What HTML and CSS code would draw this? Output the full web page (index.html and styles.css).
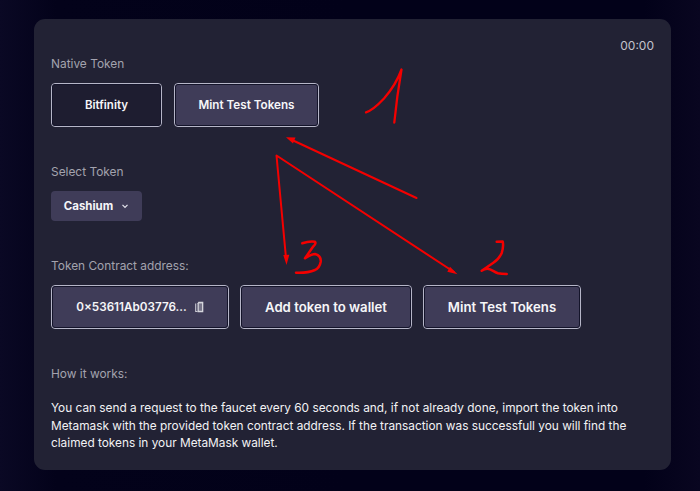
FILE: index.html
```html
<!DOCTYPE html>
<html lang="en">
<head>
<meta charset="utf-8">
<title>Faucet</title>
<link rel="stylesheet" href="styles.css">
</head>
<body>
<main class="card">
  <div class="timer">00:00</div>
  <section class="group group-native">
    <h2 class="label">Native Token</h2>
    <div class="row row-small">
      <button class="btn btn-dark btn-bitfinity">Bitfinity</button>
      <button class="btn btn-mint-small">Mint Test Tokens</button>
    </div>
  </section>
  <section class="group group-select">
    <h2 class="label">Select Token</h2>
    <button class="select">Cashium
      <svg class="chev" width="8" height="6" viewBox="0 0 8 6"><path d="M1.500 1.800 4 4.300 6.500 1.800" fill="none" stroke="#e6e6ee" stroke-width="1.200"/></svg>
    </button>
  </section>
  <section class="group group-contract">
    <h2 class="label">Token Contract address:</h2>
    <div class="row row-large">
      <button class="btn btn-address">0×53611Ab03776...
        <svg class="copy" width="9" height="12" viewBox="0 0 9 12"><path d="M.7 2.500V10.500H2.500" fill="none" stroke="#c9c9d2" stroke-width="1.100"/><path d="M2.500 2.200 3.500.8H8.300V11.200H2.500Z" fill="#d5d5dc"/><rect x="3.800" y="2.400" width="3.200" height="7.400" fill="#767488"/></svg>
      </button>
      <button class="btn btn-add">Add token to wallet</button>
      <button class="btn btn-mint">Mint Test Tokens</button>
    </div>
  </section>
  <section class="group group-how">
    <h2 class="label">How it works:</h2>
    <p class="desc">You can send a request to the faucet every 60 seconds and, if not already done, import the token into Metamask with the provided token contract address. If the transaction was successfull you will find the claimed tokens in your MetaMask wallet.</p>
  </section>
</main>
<svg class="marks" width="700" height="491" viewBox="0 0 700 491" aria-hidden="true">
  <g fill="none" stroke="#f40000" stroke-linecap="round" stroke-linejoin="round">
    <path stroke-width="2" d="M416.500 198 291 139.500"/>
    <path stroke-width="2" d="M454 272 276.500 155.500 286 258"/>
    <path stroke-width="2.300" d="M366 112.300C372 110.500 377 106 384 98.500 391 90.500 397 82 401.500 69.500 399 84 396.500 100 394.300 122.500"/>
    <path stroke-width="2.500" d="M302.300 243.300C306 242 311 241 315 241.700 316 243 315 245 313 246.700L305 258.300C309 256 312 254 315 254 319 255 321 258 320.700 261.700 320 266 318 268.500 315 270 309 272.500 302 273 296 272.700"/>
    <path stroke-width="2.500" d="M496.700 241.700 502.700 241.500C503.500 245 503 249 501.700 253 499.500 258 497 260.500 493 263L481.700 270.700C485 268.500 488 268.500 490 269.300 493 270.500 495 272.500 498 273.300 501 274 504 274 506.700 274"/>
  </g>
  <path fill="#f40000" d="M286 137.300 295.500 137.500 293 143.500Z"/>
  <path fill="#f40000" d="M457.500 274.300 447.300 271.700 450 266.700Z"/>
  <path fill="#f40000" d="M286.500 265 283.300 255 289.300 254.800Z"/>
</svg>
</body>
</html>
```
FILE: styles.css
```css
* { box-sizing: border-box; }
html, body { height: 100%; }
body {
  margin: 0;
  width: 700px;
  height: 491px;
  overflow: hidden;
  padding: 19px 29px 21px 34px;
  background: linear-gradient(90deg, #0a0824 0%, #03021a 8%, #020119 50%, #020119 92%, #090620 100%);
  font-family: Inter, "Liberation Sans", sans-serif;
  color: #fff;
}
.card {
  width: 637px;
  height: 451px;
  padding: 0 17px;
  border-radius: 11px;
  background: #222234;
  display: flex;
  flex-direction: column;
}
.timer {
  align-self: flex-end;
  margin-top: 19px;
  height: 16px;
  line-height: 16px;
  font-size: 12px;
  color: #c4c3cc;
}
.group { display: flex; flex-direction: column; align-items: flex-start; }
.group-native { margin-top: 2px; }
.group-select { margin-top: 36.500px; }
.group-contract { margin-top: 37px; }
.group-how { margin-top: 37px; }
.label {
  margin: 0 0 11px;
  height: 16px;
  line-height: 16px;
  font-size: 11.900px;
  font-weight: 400;
  color: #a3a2ae;
}
.row { display: flex; }
.row-small { gap: 12px; }
.row-large { gap: 11px; }
.btn {
  height: 44px;
  padding: 0;
  border: 1px solid #b6b6c8;
  border-radius: 4px;
  outline: 1px solid #14142a;
  outline-offset: -2px;
  background: #3f3c58;
  color: #f6f6f8;
  font-family: inherit;
  font-weight: 600;
  display: flex;
  align-items: center;
  justify-content: center;
}
.btn-dark { background: #1e1d30; }
.btn-bitfinity { width: 111px; font-size: 11.500px; }
.btn-mint-small { width: 145px; font-size: 11.700px; }
.btn-address { width: 178px; font-size: 11.700px; gap: 8px; }
.btn-add { width: 172px; font-size: 13.200px; }
.btn-mint { width: 158px; font-size: 13.200px; }
.select {
  width: 91px;
  height: 30px;
  border: 0;
  border-radius: 4px;
  background: #3f3c58;
  color: #f6f6f8;
  font-family: inherit;
  font-size: 11.500px;
  font-weight: 700;
  display: flex;
  align-items: center;
  justify-content: center;
  gap: 8px;
  padding: 0;
}
.desc {
  margin: 7.500px 0 0;
  font-size: 11.830px;
  line-height: 17.700px;
  color: #f2f2f5;
}
.marks { position: absolute; left: 0; top: 0; pointer-events: none; }
```
